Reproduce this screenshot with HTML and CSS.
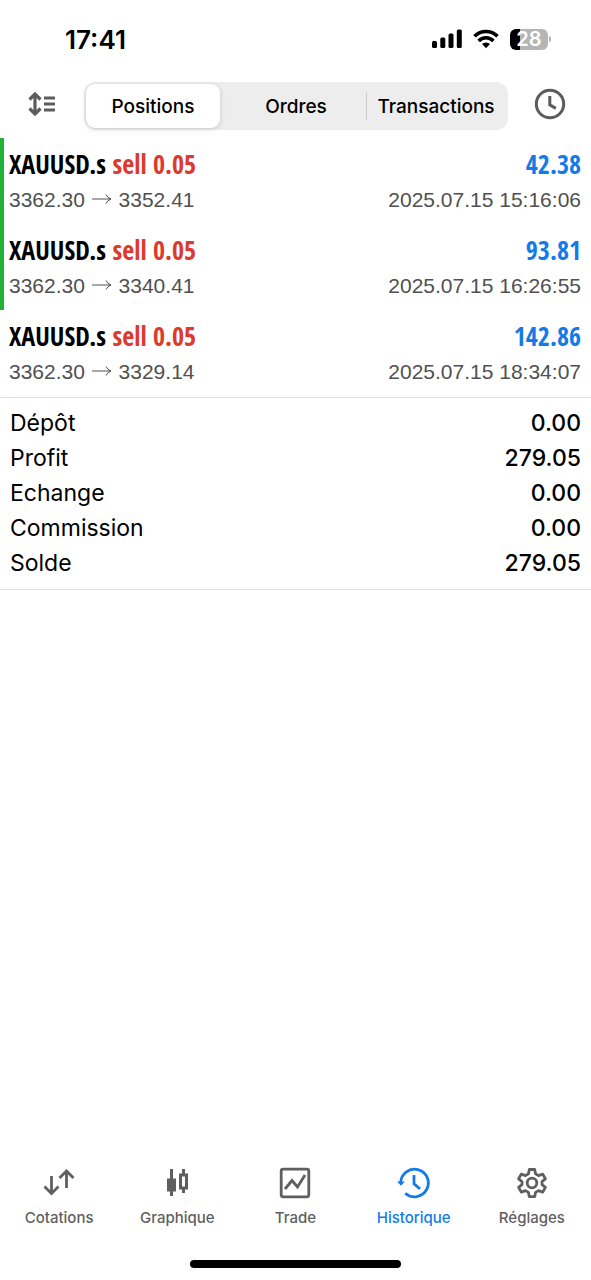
FILE: index.html
```
<!DOCTYPE html>
<html lang="fr">
<head>
<meta charset="utf-8">
<meta name="viewport" content="width=device-width, initial-scale=1">
<title>Historique</title>
<link rel="stylesheet" href="styles.css">
</head>
<body>
<div class="app">
  <header class="status">
    <time class="clock">17:41</time>
    <div class="indicators">
      <svg width="30" height="20" viewBox="0 0 30 20" aria-hidden="true">
        <rect x="0" y="12" width="5" height="7" rx="1.5"/>
        <rect x="8.3" y="8.500" width="5" height="10.500" rx="1.500"/>
        <rect x="16.500" y="4.500" width="5" height="14.500" rx="1.500"/>
        <rect x="24.800" y="0.500" width="5" height="18.500" rx="1.500"/>
      </svg>
      <svg width="26" height="20" viewBox="0 0 26 20" aria-hidden="true">
        <g fill="none" stroke="#000" stroke-width="3.600">
          <path d="M1.500 7.200a16.300 16.300 0 0 1 23 0"/>
          <path d="M5.600 11.900a10.400 10.400 0 0 1 14.800 0"/>
        </g>
        <path d="M13 19.300l-4-4.200a5.800 5.800 0 0 1 8 0z"/>
      </svg>
      <span class="battery"><span class="cell">28</span><span class="tip"></span></span>
    </div>
  </header>

  <div class="toolbar">
    <button class="tool" type="button" aria-label="Trier">
      <svg width="28" height="26" viewBox="0 0 28 26" fill="none" stroke="#5c5c5c" stroke-width="3.200" aria-hidden="true">
        <path d="M7 3.500v19M1.500 8.500L7 3 12.500 8.500M1.500 17.500L7 23 12.500 17.500"/>
        <path d="M16 7H27M16 13H27M16 19H27" stroke-width="2.800"/>
      </svg>
    </button>
    <div class="segments">
      <button class="segment selected" type="button">Positions</button>
      <button class="segment" type="button">Ordres</button>
      <button class="segment divided" type="button">Transactions</button>
    </div>
    <button class="tool" type="button" aria-label="Période">
      <svg width="32" height="32" viewBox="0 0 32 32" fill="none" stroke="#5c5c5c" stroke-width="3" aria-hidden="true">
        <circle cx="16" cy="16" r="13.700"/>
        <path d="M15.800 8v8.800l6 3.600"/>
      </svg>
    </button>
  </div>

  <main class="content">
    <ul class="deals">
      <li class="deal marked">
        <span class="symbol">XAUUSD.s <span class="side">sell 0.05</span></span><span class="gain">42.38</span>
        <span class="prices">3362.30 <svg class="arrow" width="20" height="12" viewBox="0 0 20 12" aria-label="à"><path d="M0 6H19M14 1.500Q15.500 5 19 6Q15.500 7 14 10.500"/></svg> 3352.41</span><time class="date">2025.07.15 15:16:06</time>
      </li>
      <li class="deal marked">
        <span class="symbol">XAUUSD.s <span class="side">sell 0.05</span></span><span class="gain">93.81</span>
        <span class="prices">3362.30 <svg class="arrow" width="20" height="12" viewBox="0 0 20 12" aria-label="à"><path d="M0 6H19M14 1.500Q15.500 5 19 6Q15.500 7 14 10.500"/></svg> 3340.41</span><time class="date">2025.07.15 16:26:55</time>
      </li>
      <li class="deal">
        <span class="symbol">XAUUSD.s <span class="side">sell 0.05</span></span><span class="gain">142.86</span>
        <span class="prices">3362.30 <svg class="arrow" width="20" height="12" viewBox="0 0 20 12" aria-label="à"><path d="M0 6H19M14 1.500Q15.500 5 19 6Q15.500 7 14 10.500"/></svg> 3329.14</span><time class="date">2025.07.15 18:34:07</time>
      </li>
    </ul>
    <dl class="summary">
      <div class="line"><dt>Dépôt</dt><dd>0.00</dd></div>
      <div class="line"><dt>Profit</dt><dd>279.05</dd></div>
      <div class="line"><dt>Echange</dt><dd>0.00</dd></div>
      <div class="line"><dt>Commission</dt><dd>0.00</dd></div>
      <div class="line"><dt>Solde</dt><dd>279.05</dd></div>
    </dl>
  </main>

  <nav class="tabs">
    <a class="tab" href="#cotations">
      <svg width="32" height="32" viewBox="0 0 32 32" fill="none" stroke="currentColor" stroke-width="2.800" aria-hidden="true"><path d="M8.500 9v17M1.500 19.500l7 7 7-7M23.500 21V4.500M16.500 11l7-7 7 7"/></svg>
      Cotations
    </a>
    <a class="tab" href="#graphique">
      <svg width="32" height="32" viewBox="0 0 32 32" fill="none" stroke="currentColor" stroke-width="3" aria-hidden="true"><path d="M10.500 2v27M22.500 2v6M22.500 21v5"/><path d="M6 11.500h9v13H6z" fill="currentColor" stroke="none"/><path d="M19.500 8h6v13h-6z"/></svg>
      Graphique
    </a>
    <a class="tab" href="#trade">
      <svg width="32" height="32" viewBox="0 0 32 32" fill="none" stroke="currentColor" stroke-width="2.800" aria-hidden="true"><rect x="2.200" y="2.200" width="27.600" height="27.600" rx="2"/><path d="M6 22l7-8.500 5.500 6.500 7.500-12"/></svg>
      Trade
    </a>
    <a class="tab active" href="#historique" aria-current="page">
      <svg width="34" height="32" viewBox="0 0 34 32" fill="none" stroke="currentColor" stroke-width="2.800" aria-hidden="true"><path d="M3.700 16A13.800 13.800 0 1 1 8.200 26.200"/><path d="M17 8v8.800l6 5"/><path d="M0 14.500h7.900l-3.900 4.300z" fill="currentColor" stroke="none"/></svg>
      Historique
    </a>
    <a class="tab" href="#reglages">
      <svg width="32" height="32" viewBox="0 0 32 32" fill="none" stroke="currentColor" stroke-width="2.800" stroke-linejoin="round" aria-hidden="true"><circle cx="16" cy="16" r="4.800"/><path d="M13.300 2.500h5.400l.8 4.300 3 1.800 4.200-1.500 2.700 4.700-3.400 2.800v3l3.400 2.800-2.700 4.700-4.200-1.500-3 1.800-.8 4.300h-5.400l-.8-4.300-3-1.800-4.200 1.500-2.700-4.700 3.400-2.800v-3l-3.400-2.800 2.700-4.700 4.200 1.500 3-1.800z"/></svg>
      Réglages
    </a>
  </nav>
  <div class="home"></div>
</div>
</body>
</html>
```
FILE: styles.css
```
* { box-sizing: border-box; }
body { margin: 0; background: #fff; color: #000; font-family: Inter, sans-serif; }
button { border: 0; padding: 0; background: none; color: inherit; font: inherit; cursor: pointer; }
ul, dl, dd { margin: 0; padding: 0; list-style: none; }
svg { flex: none; }

.app { display: flex; flex-direction: column; min-height: 100vh; }

.status { display: flex; justify-content: space-between; align-items: center; height: 78px; padding: 0 40px 0 65px; }
.clock { font-size: 26px; font-weight: 600; }
.indicators { display: flex; align-items: center; gap: 11px; }
.battery { display: flex; align-items: center; gap: 1px; }
.cell { width: 38px; height: 21px; border-radius: 6px; background: linear-gradient(90deg, #000 10px, #b5b5b5 10px); color: #fff; font-size: 20px; font-weight: 600; line-height: 21px; text-align: center; }
.tip { width: 2px; height: 6px; border-radius: 0 2px 2px 0; background: #b5b5b5; }

.toolbar { display: grid; grid-template-columns: 84px 1fr 83px; padding: 4px 0 8px; }
.tool { display: grid; place-items: center; height: 44px; }
.segments { display: grid; grid-template-columns: repeat(3, 1fr); height: 48px; padding: 2px; border-radius: 12px; background: #ededee; }
.segment { border-radius: 9px; font-size: 19px; font-weight: 500; white-space: nowrap; }
.selected { margin-right: 6px; background: #fff; box-shadow: 0 1px 5px rgba(0, 0, 0, .16); }
.divided { background: linear-gradient(#ccc, #ccc) left center / 1px 28px no-repeat; }

.content { flex: 1; }
.deals { border-bottom: 1px solid #dcdcdc; padding-bottom: 1px; }
.deal { display: grid; grid-template-columns: 1fr auto; align-content: center; height: 86px; padding: 2px 10px 0 5px; border-left: 4px solid transparent; }
.marked { border-color: #1fb237; }
.symbol, .gain { font-family: "Open Sans Condensed", "Roboto Condensed", "Liberation Sans Narrow", sans-serif; font-size: 26px; font-weight: 700; line-height: 36px; }
.side { color: #dc3a2e; }
.gain { color: #147be6; text-align: right; }
.prices, .date { color: #505050; font-family: "Liberation Sans", Arial, sans-serif; font-size: 21px; line-height: 36px; }
.arrow { margin: 0 1px; fill: none; stroke: #505050; vertical-align: 2px; }

.summary { padding: 8px 10px; border-bottom: 1px solid #dcdcdc; }
.line { display: flex; justify-content: space-between; font-size: 23px; line-height: 35px; }
.line dd { font-weight: 500; }

.tabs { display: grid; grid-template-columns: repeat(5, 1fr); padding-bottom: 32px; }
.tab { display: flex; flex-direction: column; align-items: center; gap: 9px; color: #5f5f5f; font-size: 15px; font-weight: 500; line-height: 20px; text-decoration: none; }
.active { color: #147be6; }
.home { width: 211px; height: 8px; margin: 0 auto 12px; border-radius: 4px; background: #000; }
```
